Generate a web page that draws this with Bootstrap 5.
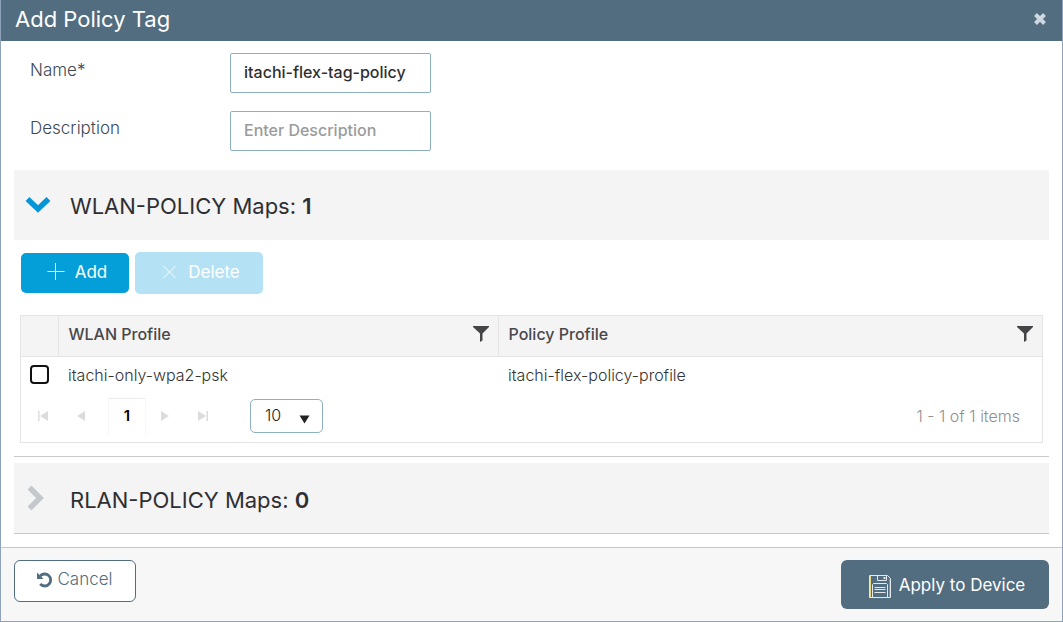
<!DOCTYPE html>
<html lang="en">
<head>
<meta charset="utf-8">
<meta name="viewport" content="width=device-width, initial-scale=1">
<title>Add Policy Tag</title>
<link href="https://cdn.jsdelivr.net/npm/bootstrap@5.3.0/dist/css/bootstrap.min.css" rel="stylesheet">
<style>
  body { font-family: Inter, "Liberation Sans", sans-serif; color: #2f2f33; background: #fff; }
  .tag-dialog { border: 1px solid #8ea2bb; border-top: 0; }
  .tag-header { background: #526d80; height: 41px; padding: 0 13px 3px 14px; }
  .tag-title { font-size: 22px; line-height: 38px; font-weight: 400; color: #fff; }
  .tag-close { width: 18px; height: 18px; color: #cfd7e0; }
  .tag-body { padding: 12px 13px 13px; }
  .field-row { padding-left: 16px; margin-bottom: 18px; }
  .field-row label { width: 200px; font-size: 17px; line-height: 34px; font-weight: 300; color: #3c4a55; }
  .field-row .form-control { width: 201px; height: 40px; padding: 0 13px 2px; font-size: 16px; font-weight: 500; border: 1px solid #8cb0c1; border-radius: 2px; color: #2f2f33; }
  .field-row .form-control::placeholder { color: #9b9b9b; opacity: 1; }
  .map-bar { background: #f4f4f4; height: 70px; padding: 2px 11px 0; border: 0; width: 100%; color: #2f2f33; }
  .map-bar .arrow-box { width: 45px; padding-bottom: 2px; }
  .map-title { font-size: 22px; line-height: 30px; font-weight: 400; }
  .map-count { font-weight: 600; }
  .map-section { padding-top: 3px; }
  .tool-row { padding: 12px 7px 21px; gap: 6px; }
  .tool-row .btn { font-size: 17px; line-height: 24px; border: 0; color: #fff; border-radius: 5px; padding: 0 0 3px 4px; font-weight: 400; gap: 10px; }
  .btn-add { width: 108px; height: 40px; background: #049fd9; }
  .tool-row .btn-del { width: 128px; height: 42px; background: #b4e2f4; opacity: 1; }
  .map-grid { margin: 0 6px 13px; border: 1px solid #e4e4e4; }
  .map-table { width: 100%; table-layout: fixed; }
  .map-table th { height: 40px; background: #f4f4f4; border-bottom: 1px solid #e4e4e4; font-size: 16px; font-weight: 500; color: #48484b; padding: 0 9px 3px 10px; }
  .map-table th + th { border-left: 1px solid #e4e4e4; }
  .map-table td { height: 38px; font-size: 16px; font-weight: 300; padding: 0 9px 1px 10px; color: #333; }
  .map-table td:first-child { padding-left: 9px; }
  .col-check { width: 37px; }
  .col-wlan { width: 440px; }
  .map-table .form-check-input { display: block; width: 19px; height: 19px; margin: 0; border: 2px solid #111; border-radius: 4px; }
  .filter-btn, .page-btn { border: 0; background: none; padding: 0; line-height: 0; }
  .pager { height: 48px; padding: 0 22px 4px 15px; }
  .page-btn { width: 14px; height: 14px; color: #dcdcdf; }
  .page-now { width: 38px; height: 37px; border: 1px solid #f8f8f8; border-top-color: #ececec; border-bottom: 0; font-size: 15px; line-height: 34px; font-weight: 600; color: #000; text-decoration: none; margin: 0 12px 0 20px; }
  .size-pick { width: 73px; height: 34px; margin-left: 40px; }
  .size-pick select { width: 73px; height: 34px; appearance: none; border: 1px solid #8cb0c1; border-radius: 5px; background: #fff; padding: 0 14px 2px; font-size: 16px; font-weight: 300; color: #222; }
  .size-pick svg { position: absolute; right: 13px; bottom: 9px; pointer-events: none; }
  .item-count { font-size: 16px; font-weight: 300; color: #8f8f8f; }
  .rule-line { border-top: 1px solid #c9c9c9; padding-top: 6px; }
  .rule-end { border-bottom: 1px solid #c9c9c9; }
  .rule-end .map-bar { padding-top: 4px; }
  .tag-footer { background: #f7f7f7; border-top: 1px solid #c4c6c9; padding: 12px 13px; }
  .btn-cancel { width: 122px; height: 42px; background: #fff; border: 1px solid #526d80; border-radius: 6px; color: #526d80; font-size: 17px; font-weight: 300; padding: 0 0 2px; }
  .btn-cancel:hover { background: #fff; color: #526d80; }
  .btn-apply { width: 208px; height: 49px; background: #526d80; border: 0; border-radius: 6px; color: #fff; font-size: 17px; font-weight: 400; padding: 3px 0 0 4px; }
</style>
</head>
<body>
<main class="tag-dialog d-flex flex-column min-vh-100">
  <header class="tag-header d-flex justify-content-between align-items-center">
    <h1 class="tag-title m-0">Add Policy Tag</h1>
    <button type="button" class="tag-close border-0 bg-transparent p-0 d-flex align-items-center justify-content-center" aria-label="Close">
      <svg width="12" height="12" viewBox="0 0 12 12" stroke="currentColor" stroke-width="4"><path d="M1.5 1.5l9 9M10.500 1.500l-9 9"/></svg>
    </button>
  </header>

  <div class="tag-body">
    <form>
      <div class="field-row d-flex align-items-start">
        <label for="tagName">Name*</label>
        <input id="tagName" type="text" class="form-control" value="itachi-flex-tag-policy">
      </div>
      <div class="field-row d-flex align-items-start mb-3">
        <label for="tagDesc">Description</label>
        <input id="tagDesc" type="text" class="form-control" placeholder="Enter Description">
      </div>
    </form>

    <section class="map-section">
      <button type="button" class="map-bar d-flex align-items-center text-start" aria-expanded="true">
        <span class="arrow-box d-flex"><svg width="26" height="18" viewBox="0 0 26 18" fill="none" stroke="#0496d7" stroke-width="5.500"><path d="M2.500 3l10.500 10L23.500 3"/></svg></span>
        <span class="map-title">WLAN-POLICY Maps: <span class="map-count">1</span></span>
      </button>
      <div class="tool-row d-flex align-items-center">
        <button type="button" class="btn btn-add d-flex align-items-center justify-content-center">
          <svg width="18" height="18" viewBox="0 0 18 18" stroke="#fff"><path d="M0.500 8.500h17M8.500 0v17"/></svg>Add
        </button>
        <button type="button" class="btn btn-del d-flex align-items-center justify-content-center" disabled>
          <svg width="16" height="14" viewBox="0 0 16 14" stroke="#fff"><path d="M1.500 1l12 12M13.500 1l-12 12"/></svg>Delete
        </button>
      </div>
      <div class="map-grid">
        <table class="map-table">
          <colgroup><col class="col-check"><col class="col-wlan"><col></colgroup>
          <thead>
            <tr>
              <th></th>
              <th scope="col"><div class="d-flex justify-content-between align-items-center">WLAN Profile
                <button type="button" class="filter-btn" aria-label="Filter WLAN Profile"><svg width="16" height="16" viewBox="0 0 16 16" fill="#454548"><path d="M0 0h16v1L9.500 7.500v7L7 16V7.500L0 1z"/></svg></button></div></th>
              <th scope="col"><div class="d-flex justify-content-between align-items-center">Policy Profile
                <button type="button" class="filter-btn" aria-label="Filter Policy Profile"><svg width="16" height="16" viewBox="0 0 16 16" fill="#454548"><path d="M0 0h16v1L9.500 7.500v7L7 16V7.500L0 1z"/></svg></button></div></th>
            </tr>
          </thead>
          <tbody>
            <tr>
              <td><input type="checkbox" class="form-check-input" aria-label="Select itachi-only-wpa2-psk"></td>
              <td>itachi-only-wpa2-psk</td>
              <td>itachi-flex-policy-profile</td>
            </tr>
          </tbody>
        </table>
        <div class="pager d-flex align-items-center">
          <button type="button" class="page-btn" aria-label="First page"><svg width="12" height="10" viewBox="0 0 12 10" fill="currentColor"><path d="M1 0h1.500v10H1zM11 0v10L3 5z"/></svg></button>
          <button type="button" class="page-btn ms-4" aria-label="Previous page"><svg width="10" height="10" viewBox="0 0 10 10" fill="currentColor"><path d="M9 0v10L1 5z"/></svg></button>
          <a href="#" class="page-now text-center" aria-current="page">1</a>
          <button type="button" class="page-btn" aria-label="Next page"><svg width="10" height="10" viewBox="0 0 10 10" fill="currentColor"><path d="M1 0v10l8-5z"/></svg></button>
          <button type="button" class="page-btn ms-4" aria-label="Last page"><svg width="12" height="10" viewBox="0 0 12 10" fill="currentColor"><path d="M9.500 0H11v10H9.500zM1 0v10l8-5z"/></svg></button>
          <div class="size-pick position-relative">
            <select aria-label="Items per page"><option>10</option><option>25</option><option>50</option></select>
            <svg width="11" height="9" viewBox="0 0 11 9" fill="#222"><path d="M0.500 0.500h10l-5 8z"/></svg>
          </div>
          <span class="item-count ms-auto">1 - 1 of 1 items</span>
        </div>
      </div>
    </section>

    <section class="rule-line">
      <div class="rule-end">
        <button type="button" class="map-bar d-flex align-items-center text-start" aria-expanded="false">
          <span class="arrow-box d-flex"><svg width="22" height="28" viewBox="0 0 22 28" fill="none" stroke="#c4c7cc" stroke-width="5.500"><path d="M4.500 2.500l10.500 10.500L4.500 23.500"/></svg></span>
          <span class="map-title">RLAN-POLICY Maps: <span class="map-count">0</span></span>
        </button>
      </div>
    </section>
  </div>

  <footer class="tag-footer d-flex justify-content-between align-items-start flex-grow-1">
    <button type="button" class="btn btn-cancel d-flex align-items-center justify-content-center gap-1">
      <svg width="16" height="16" viewBox="0 0 16 16" fill="none" stroke="#526d80" stroke-width="2.800"><path d="M3 4.200A6 6 0 1 1 3.200 12"/><path d="M0 0.500v6.500h6.500z" fill="#526d80" stroke="none"/></svg>Cancel
    </button>
    <button type="button" class="btn btn-apply d-flex align-items-center justify-content-center gap-2">
      <svg width="22" height="23" viewBox="0 0 22 23" fill="none" stroke="#e3e8ec"><path d="M0.500 0.500h18l3 3v19H0.500zM8.500 0.500v5h9v-5M3.500 22.500V9.500l1-1h13l1 1v13M5.500 12.500h11M5.500 14.500h11M5.500 17.500h11"/><path d="M15.500 2v2" stroke-width="2"/><path d="M1.500 1v21" stroke="#e4d583"/><path d="M20.500 4v18" stroke="#c8788c"/></svg>
      Apply to Device
    </button>
  </footer>
</main>
<script src="https://cdn.jsdelivr.net/npm/bootstrap@5.3.0/dist/js/bootstrap.bundle.min.js"></script>
</body>
</html>
